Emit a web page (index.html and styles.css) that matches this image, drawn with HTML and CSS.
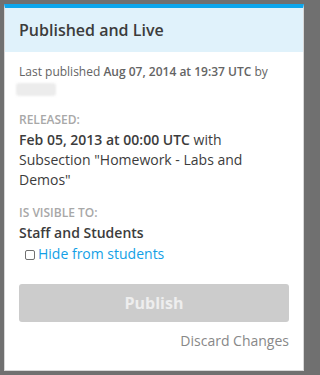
FILE: index.html
```html
<!DOCTYPE html>
<html>
<head>
<meta charset="utf-8">
<link rel="stylesheet" href="styles.css">
</head>
<body>
<div class="panel">
  <div class="header"><h3 class="title">Published and Live</h3></div>
  <div class="body">
    <p class="meta">Last published <b>Aug 07, 2014 at 19:37 UTC</b> by</p>
    <div class="user"></div>
    <div class="section">
      <div class="label">RELEASED:</div>
      <p class="value"><b>Feb 05, 2013 at 00:00 UTC</b> with Subsection "Homework - Labs and Demos"</p>
    </div>
    <div class="section vis">
      <div class="label">IS VISIBLE TO:</div>
      <p class="value"><b>Staff and Students</b></p>
      <label class="check"><span class="box"></span><span class="link">Hide from students</span></label>
    </div>
    <div class="actions">
      <div class="btn">Publish</div>
      <div class="discard">Discard Changes</div>
    </div>
  </div>
</div>
</body>
</html>
```
FILE: styles.css
```css
html { background: #707070; }
html, body { margin: 0; padding: 0; }
body {
  background: #707070;
  width: 308px;
  height: 375px;
  padding: 4px;
  box-sizing: border-box;
  font-family: "Open Sans", "Liberation Sans", sans-serif;
}
.panel {
  background: #fff;
  border: 1px solid #d8d8d8;
  border-top: 4px solid #0ea6ec;
  height: 367px;
  box-sizing: border-box;
}
.header {
  background: #e0f2fb;
  height: 44px;
  display: flex;
  align-items: center;
  padding: 0 14px;
}
.title {
  margin: 0;
  font-size: 16px;
  font-weight: 600;
  color: #3c3c3c;
}
.body { padding: 11px 14px 0 14px; }
.meta {
  margin: 0;
  font-size: 12px;
  line-height: 18px;
  color: #646464;
}
.meta b { font-weight: 600; }
.user {
  width: 40px;
  height: 13px;
  background: #ececec;
  border-radius: 3px;
  margin: 2px 0 0 -3px;
  filter: blur(1px);
}
.section { margin-top: 16px; }
.vis { margin-top: 15px; }
.label {
  font-size: 12px;
  font-weight: 600;
  color: #a8a8a8;
  line-height: 16px;
}
.value {
  margin: 2px 0 0 0;
  font-size: 14px;
  line-height: 20px;
  color: #3c3c3c;
}
.value b { font-weight: 600; }
.check {
  display: flex;
  align-items: center;
  margin: 1px 0 0 6px;
  font-size: 14px;
  line-height: 20px;
}
.box {
  width: 8px;
  height: 8px;
  border: 1px solid #707070;
  border-radius: 2px;
  margin: 1px 3px 0 0;
}
.link { color: #139fe6; }
.actions { margin-top: 20px; }
.btn {
  height: 38px;
  background: #cccccc;
  border-radius: 3px;
  color: #eeeeee;
  font-weight: 700;
  font-size: 16px;
  display: flex;
  align-items: center;
  justify-content: center;
}
.discard {
  text-align: right;
  font-size: 14px;
  color: #888;
  margin-top: 9px;
  line-height: 20px;
}
```
